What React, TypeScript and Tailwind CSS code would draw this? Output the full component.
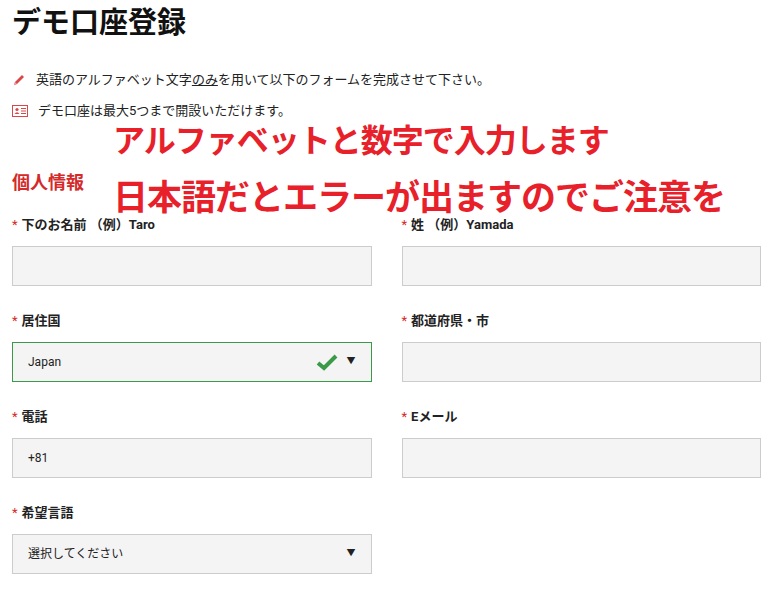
import React from "react";

const F = { fontFamily: '"Roboto","Noto Sans CJK JP",sans-serif' };

function Label({ t }: { t: string }) {
  return (
    <div className="h-[20px] text-[13px] font-bold text-[#222] flex items-center">
      <span className="text-[#d42a2a] mr-[4px] font-normal">*</span>
      {t}
    </div>
  );
}

function Field({ children, green }: { children?: React.ReactNode; green?: boolean }) {
  return (
    <div
      className={`mt-[11px] h-[40px] bg-[#f4f4f4] border flex items-center px-[15px] text-[12px] text-[#222] ${
        green ? "border-[#3a9a47]" : "border-[#cccccc]"
      }`}
    >
      {children}
    </div>
  );
}

export default function App() {
  return (
    <div className="relative w-[772px] h-[592px] bg-white overflow-hidden" style={F}>
      <div className="px-[12px]">
        <h1 className="pt-[4px] text-[29px] font-bold text-[#111] leading-[38px]">デモ口座登録</h1>
        <div className="mt-[28px] flex items-center gap-[10px] text-[13px] text-[#222] h-[20px]">
          <svg width="14" height="14" viewBox="0 0 14 14">
            <path d="M2 12 L3 9 L10 2 L12 4 L5 11 Z" fill="#d94848" />
            <path d="M2 12 L3 9 L5 11 Z" fill="#f0a0a0" />
          </svg>
          <span>
            英語のアルファベット文字<span className="underline">のみ</span>を用いて以下のフォームを完成させて下さい。
          </span>
        </div>
        <div className="mt-[11px] flex items-center gap-[10px] text-[13px] text-[#222] h-[20px]">
          <svg width="16" height="12" viewBox="0 0 16 12">
            <rect x="0.5" y="0.5" width="15" height="11" fill="none" stroke="#d94848" />
            <circle cx="5" cy="4.5" r="1.6" fill="#d94848" />
            <path d="M2.5 9 Q5 5.5 7.5 9 Z" fill="#d94848" />
            <rect x="9" y="3" width="5" height="1" fill="#d94848" />
            <rect x="9" y="5.5" width="5" height="1" fill="#d94848" />
            <rect x="9" y="8" width="5" height="1" fill="#d94848" />
          </svg>
          <span>デモ口座は最大5つまで開設いただけます。</span>
        </div>
        <h2 className="mt-[50px] text-[18px] font-bold text-[#d42a2a] leading-[24px]">個人情報</h2>
        <div className="mt-[20px] grid grid-cols-2 gap-x-[30px] gap-y-[25px] w-[749px]">
          <div>
            <Label t="下のお名前 （例）Taro" />
            <Field />
          </div>
          <div>
            <Label t="姓 （例）Yamada" />
            <Field />
          </div>
          <div>
            <Label t="居住国" />
            <Field green>
              <span className="flex-1">Japan</span>
              <svg width="22" height="18" viewBox="0 0 22 18">
                <path d="M2 10 L8 15 L20 3" stroke="#3a9a47" strokeWidth="4" fill="none" />
              </svg>
              <span className="ml-[8px] text-[9px]">▼</span>
            </Field>
          </div>
          <div>
            <Label t="都道府県・市" />
            <Field />
          </div>
          <div>
            <Label t="電話" />
            <Field>+81</Field>
          </div>
          <div>
            <Label t="Eメール" />
            <Field />
          </div>
          <div>
            <Label t="希望言語" />
            <Field>
              <span className="flex-1">選択してください</span>
              <span className="text-[9px]">▼</span>
            </Field>
          </div>
        </div>
      </div>
      <div className="absolute left-[113px] top-[118px] text-[#e8202a] font-bold text-[32px] leading-[46px] tracking-[-1px]">
        アルファベットと数字で入力します
      </div>
      <div className="absolute left-[113px] top-[176px] text-[#e8202a] font-bold text-[35px] leading-[46px] tracking-[-1px]">
        日本語だとエラーが出ますのでご注意を
      </div>
    </div>
  );
}
